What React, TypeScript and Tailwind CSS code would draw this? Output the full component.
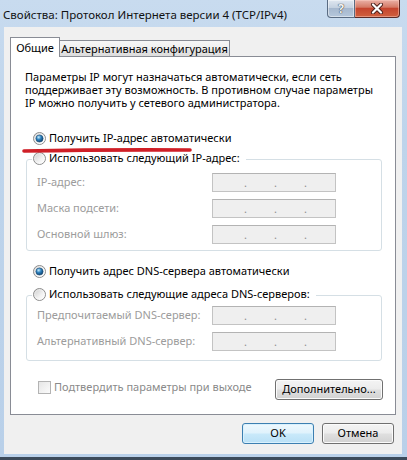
import React from "react";

function Radio({ checked = false }: { checked?: boolean }) {
  return (
    <svg width="13" height="13" viewBox="0 0 13 13" className="block shrink-0">
      <defs>
        <linearGradient id="rbFill" x1="0" y1="0" x2="1" y2="1">
          <stop offset="0" stopColor="#c9c9c9" />
          <stop offset="0.6" stopColor="#f3f3f3" />
          <stop offset="1" stopColor="#ffffff" />
        </linearGradient>
        <radialGradient id="rbDot" cx="0.38" cy="0.32" r="0.75">
          <stop offset="0" stopColor="#c6ecfd" />
          <stop offset="0.45" stopColor="#2c80bd" />
          <stop offset="1" stopColor="#0c3a64" />
        </radialGradient>
      </defs>
      <circle cx="6.5" cy="6.5" r="6" fill="url(#rbFill)" stroke="#8d8d8d" strokeWidth="1" />
      <circle cx="6.5" cy="6.5" r="4.8" fill="none" stroke="#ffffff" strokeOpacity="0.5" strokeWidth="0.8" />
      {checked && <circle cx="6.5" cy="6.5" r="3.6" fill="url(#rbDot)" stroke="#1a4a74" strokeWidth="0.6" />}
    </svg>
  );
}

function IpBox() {
  return (
    <div className="w-[124px] h-[19px] border border-[#c3c3c3] border-t-[#b3b3b3] bg-[#efefef] flex items-center text-[11px] leading-[19px] text-[#8e8e8e]">
      <span className="w-[31px]" />
      <span>.</span>
      <span className="w-[27px]" />
      <span>.</span>
      <span className="w-[27px]" />
      <span>.</span>
    </div>
  );
}

function FieldRow({ label }: { label: string }) {
  return (
    <div className="flex items-center h-[19px]">
      <div className="w-[175px] text-[#9c9c9c] whitespace-nowrap">{label}</div>
      <IpBox />
    </div>
  );
}

function RadioRow({ checked, label }: { checked?: boolean; label: string }) {
  return (
    <div className="flex items-center h-[14px] gap-[3px] whitespace-nowrap">
      <Radio checked={checked} />
      <span>{label}</span>
    </div>
  );
}

function WinButton({ children, w, def = false }: { children: React.ReactNode; w: string; def?: boolean }) {
  return (
    <div
      className={
        def
          ? `${w} h-[21px] rounded-[3px] border border-[#3c7fb1] bg-[linear-gradient(180deg,#eef8fe_0%,#dff2fc_48%,#c9e9fa_52%,#b9e0f6_100%)] shadow-[inset_0_0_0_1px_#d9f1fd] flex items-center justify-center text-black`
          : `${w} h-[21px] rounded-[3px] border border-[#707070] bg-[linear-gradient(180deg,#f4f4f4_0%,#ececec_48%,#dfdfdf_52%,#d2d2d2_100%)] shadow-[inset_0_0_0_1px_#fbfbfb] flex items-center justify-center text-black`
      }
    >
      {children}
    </div>
  );
}

export default function App() {
  return (
    <div className="w-[407px] h-[460px] overflow-hidden bg-[linear-gradient(180deg,#c8dbef_0%,#bed4eb_30%,#b9d0e9_100%)] font-['Noto_Sans',sans-serif] text-[11px] text-black flex flex-col">
      {/* Title bar */}
      <div className="h-[27px] flex shrink-0">
        <div className="pl-[3px] pt-[7px] text-[11.5px] leading-[16px] whitespace-nowrap text-[#111]">
          Свойства: Протокол Интернета версии 4 (TCP/IPv4)
        </div>
        <div className="ml-auto mr-[7px] flex h-[18px]">
          <div className="w-[28px] h-[18px] border border-t-0 border-[#596b82] rounded-bl-[4px] bg-[linear-gradient(180deg,#dfe7f0_0%,#c4d1e0_45%,#a6b8ce_50%,#b5c7dc_100%)] shadow-[inset_0_0_0_1px_rgba(255,255,255,0.45)] flex items-center justify-center">
            <span className="text-[12px] leading-[12px] font-bold text-[#f4f6f8] [text-shadow:0_0_1px_#333,0_0_1px_#333]">?</span>
          </div>
          <div className="w-[45px] h-[18px] border border-t-0 border-l-0 border-[#5a2a26] rounded-br-[4px] bg-[linear-gradient(180deg,#eab1a6_0%,#d57a66_42%,#c5452e_50%,#d0613f_100%)] shadow-[inset_0_0_0_1px_rgba(255,210,200,0.45)] flex items-center justify-center">
            <svg width="14" height="11" viewBox="0 0 14 11">
              <path d="M3 1.5 L11 9.5 M11 1.5 L3 9.5" stroke="#4a1f1a" strokeWidth="4" strokeLinecap="round" />
              <path d="M3 1.5 L11 9.5 M11 1.5 L3 9.5" stroke="#ffffff" strokeWidth="2.2" strokeLinecap="round" />
            </svg>
          </div>
        </div>
      </div>

      {/* Client */}
      <div className="ml-[4px] w-[398px] h-[427px] bg-[#f0f0f0] pt-[10px] pl-[6px] flex flex-col shrink-0">
        {/* Tabs */}
        <div className="flex items-end h-[20px] -mb-px relative z-10">
          <div className="w-[50px] h-[20px] border border-b-0 border-[#898c95] bg-white flex items-center justify-center leading-[14px]">
            Общие
          </div>
          <div className="w-[171px] h-[16px] mb-px -ml-px border border-b-0 border-[#898c95] bg-[linear-gradient(180deg,#f6f6f6_0%,#efefef_50%,#e6e6e6_51%,#dddddd_100%)] flex items-center justify-center leading-[14px] whitespace-nowrap">
            Альтернативная конфигурация
          </div>
        </div>

        {/* Panel */}
        <div className="relative w-[386px] h-[359px] border border-[#898c95] bg-white flex flex-col">
          <div className="mt-[13px] pl-[14px] leading-[13px] whitespace-nowrap">
            <div>Параметры IP могут назначаться автоматически, если сеть</div>
            <div>поддерживает эту возможность. В противном случае параметры</div>
            <div>IP можно получить у сетевого администратора.</div>
          </div>

          <div className="mt-[22px] pl-[22px]">
            <RadioRow checked label="Получить IP-адрес автоматически" />
          </div>

          <fieldset className="mt-[6px] ml-[15px] w-[356px] border border-[#d5dfe5] rounded-[3px] pt-[6px] pb-[6px]">
            <legend className="ml-[5px] pl-[1px] pr-[6px] h-[16px]">
              <RadioRow label="Использовать следующий IP-адрес:" />
            </legend>
            <div className="pl-[10px] flex flex-col gap-[7px]">
              <FieldRow label="IP-адрес:" />
              <FieldRow label="Маска подсети:" />
              <FieldRow label="Основной шлюз:" />
            </div>
          </fieldset>

          <div className="mt-[13px] pl-[22px]">
            <RadioRow checked label="Получить адрес DNS-сервера автоматически" />
          </div>

          <fieldset className="mt-[9px] ml-[15px] w-[356px] border border-[#d5dfe5] rounded-[3px] pt-[3px] pb-[9px]">
            <legend className="ml-[5px] pl-[1px] pr-[6px] h-[16px]">
              <RadioRow label="Использовать следующие адреса DNS-серверов:" />
            </legend>
            <div className="pl-[10px] flex flex-col gap-[7px]">
              <FieldRow label="Предпочитаемый DNS-сервер:" />
              <FieldRow label="Альтернативный DNS-сервер:" />
            </div>
          </fieldset>

          <div className="mt-[18px] pl-[27px] pr-[12px] flex items-start h-[21px]">
            <div className="mt-[2px] flex items-center gap-[3px] h-[13px] text-[#8a8a8a] whitespace-nowrap">
              <div className="w-[13px] h-[13px] border border-[#b3b3b3] bg-[linear-gradient(135deg,#e6e6e6,#fbfbfb)]" />
              <span>Подтвердить параметры при выходе</span>
            </div>
            <div className="ml-auto">
              <WinButton w="w-[108px]">Дополнительно...</WinButton>
            </div>
          </div>

          {/* red annotation stroke */}
          <svg className="absolute left-[11px] top-[89px]" width="172" height="9" viewBox="0 0 172 9">
            <path d="M2 5 Q 80 3.5 168 4" stroke="#cf1f27" strokeWidth="3.6" strokeLinecap="round" fill="none" />
          </svg>
        </div>

        {/* Bottom buttons */}
        <div className="mt-[8px] w-[386px] pr-[2px] flex justify-end gap-[8px]">
          <WinButton w="w-[72px]" def>
            OK
          </WinButton>
          <WinButton w="w-[72px]">Отмена</WinButton>
        </div>
      </div>
      <div className="mt-auto h-[3px] bg-[#3c4a5a]" />
    </div>
  );
}
